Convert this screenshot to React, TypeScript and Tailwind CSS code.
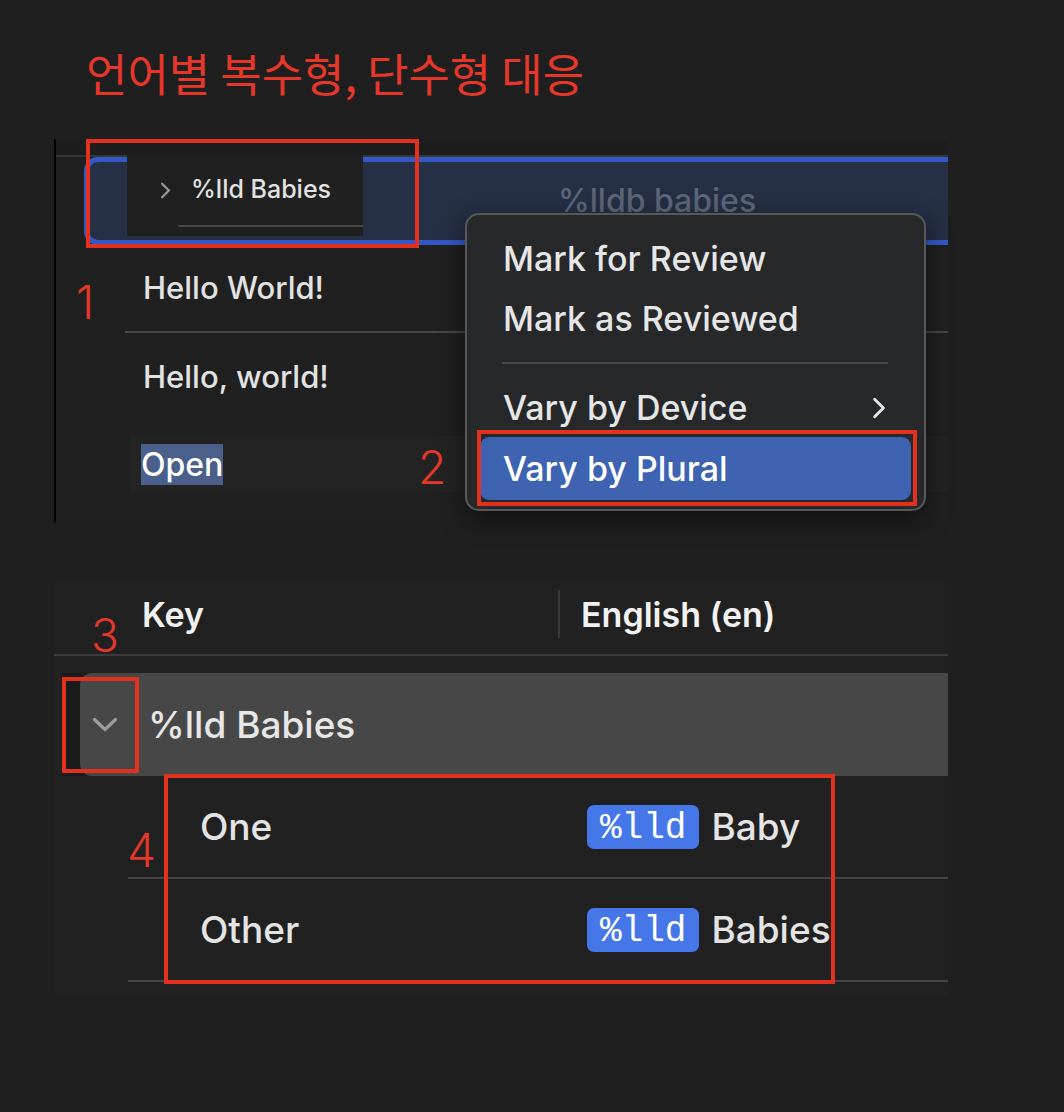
import React from 'react'

const sans = { fontFamily: 'Inter, "Noto Sans", sans-serif' }

function ChevronRight({ className }: { className?: string }) {
  return (
    <svg viewBox="0 0 12 20" className={className} fill="none" stroke="currentColor" strokeWidth="2.6" strokeLinecap="round" strokeLinejoin="round">
      <path d="M2 2l8 8-8 8" />
    </svg>
  )
}

function ChevronDown({ className }: { className?: string }) {
  return (
    <svg viewBox="0 0 26 15" className={className} fill="none" stroke="currentColor" strokeWidth="3.2" strokeLinecap="round" strokeLinejoin="round">
      <path d="M2.5 2.5l10.5 10 10.5-10" />
    </svg>
  )
}

function Badge({ children }: { children: React.ReactNode }) {
  return (
    <span className="h-[44px] px-[13px] pt-[4px] rounded-[7px] bg-[#4677e8] text-white text-[36px] leading-none flex items-center font-['Liberation_Mono',monospace]">
      {children}
    </span>
  )
}

function PluralRow({ name, word }: { name: string; word: string }) {
  return (
    <div className="ml-[74px] h-[103px] border-b-2 border-[#444444] flex items-center text-[37px] font-medium text-[#e4e4e4]">
      <div className="w-[459px] pl-[72px]">{name}</div>
      <Badge>%lld</Badge>
      <span className="ml-[12px]">{word}</span>
    </div>
  )
}

export default function App() {
  return (
    <div className="relative w-[1064px] h-[1112px] bg-[#1f1f1f] overflow-hidden" style={sans}>
      {/* title */}
      <div className="h-[139px] pl-[86px] pt-[50px]">
        <h1 className="text-[45px] leading-none font-normal text-[#e5372a] font-['Noto_Sans_CJK_KR',sans-serif]">
          언어별 복수형, 단수형 대응
        </h1>
      </div>

      {/* panel 1 : string list with context menu */}
      <div className="relative ml-[54px] w-[894px] h-[383px] bg-[#202020] border-l-2 border-black">
        <div className="h-[18px] bg-[#1d1d1d] border-b-2 border-[#363636]" />
        <div className="ml-[28px] h-[88px] border-y-[5px] border-l-[5px] border-[#3459c7] rounded-l-[14px] bg-[#252f45] flex items-center">
          <span className="pl-[469px] text-[32px] text-[#5d6679] font-medium">%lldb babies</span>
        </div>
        <div className="ml-[69px] h-[88px] pl-[18px] border-b-2 border-[#474747] flex items-center text-[31px] font-medium text-[#e2e2e2]">
          Hello World!
        </div>
        <div className="ml-[69px] h-[88px] pl-[18px] flex items-center text-[31px] font-medium text-[#e2e2e2]">
          Hello, world!
        </div>
        <div className="mt-[15px] ml-[74px] h-[56px] pl-[11px] bg-[#232323] flex items-center">
          <span className="h-[41px] bg-[#4a5f89] text-white text-[32px] font-medium leading-[41px]">Open</span>
        </div>

        {/* drag preview */}
        <div className="absolute left-[71px] top-[16px] w-[236px] h-[81px] bg-[#202020]">
          <div className="h-[70px] flex items-center pl-[33px]">
            <ChevronRight className="w-[11px] h-[17px] text-[#9a9a9a]" />
            <span className="ml-[20px] text-[25px] font-medium text-[#e2e2e2]">%lld Babies</span>
          </div>
          <div className="ml-[51px] h-[2px] bg-[#474747]" />
        </div>
      </div>

      {/* context menu */}
      <div className="absolute left-[465px] top-[213px] w-[461px] h-[298px] rounded-[14px] border-2 border-[#58585b] bg-[#27282a] pt-[13px] text-[34px] font-medium text-[#e6e6e6] shadow-[0_8px_24px_rgba(0,0,0,0.5)]">
        <div className="h-[60px] pl-[36px] flex items-center">Mark for Review</div>
        <div className="h-[60px] pl-[36px] flex items-center">Mark as Reviewed</div>
        <div className="h-[30px] flex items-center">
          <div className="ml-[35px] w-[386px] h-[2px] bg-[#484848]" />
        </div>
        <div className="h-[59px] pl-[36px] pr-[38px] flex items-center justify-between">
          <span>Vary by Device</span>
          <ChevronRight className="w-[14px] h-[22px] text-[#e6e6e6]" />
        </div>
        <div className="mx-[13px] h-[63px] rounded-[9px] bg-[#3d63b1] pl-[23px] flex items-center text-white">
          Vary by Plural
        </div>
      </div>

      {/* panel 2 : plural variations */}
      <div className="mt-[60px] ml-[54px] w-[894px] h-[413px] bg-[#212121]">
        <div className="h-[74px] pt-[8px] border-b-2 border-[#3b3b3b] flex items-start text-[34px] font-semibold text-[#f2f2f2]">
          <div className="w-[504px] h-[48px] pl-[88px] flex items-center">Key</div>
          <div className="w-[2px] h-[48px] bg-[#3a3a3a]" />
          <div className="h-[48px] pl-[21px] flex items-center">English (en)</div>
        </div>
        <div className="mt-[17px] ml-[8px] h-[103px] bg-[#1b1b1b]">
          <div className="ml-[18px] h-full rounded-l-[12px] bg-[#474747] flex items-center">
            <ChevronDown className="ml-[12px] w-[26px] h-[15px] text-[#9c9c9c]" />
            <span className="ml-[30px] text-[37px] font-medium text-[#e6e6e6]">%lld Babies</span>
          </div>
        </div>
        <PluralRow name="One" word="Baby" />
        <PluralRow name="Other" word="Babies" />
      </div>

      {/* annotation boxes */}
      <div className="absolute left-[86px] top-[139px] w-[333px] h-[109px] border-4 border-[#e2321f]" />
      <div className="absolute left-[477px] top-[430px] w-[440px] h-[76px] border-4 border-[#e2321f]" />
      <div className="absolute left-[62px] top-[677px] w-[77px] h-[96px] border-4 border-[#e2321f]" />
      <div className="absolute left-[164px] top-[774px] w-[671px] h-[210px] border-4 border-[#e2321f]" />

      {/* annotation numbers */}
      <span className="absolute left-[76px] top-[279px] text-[46px] leading-none font-light text-[#e5372a]">1</span>
      <span className="absolute left-[418px] top-[444px] text-[46px] leading-none font-light text-[#e5372a]">2</span>
      <span className="absolute left-[91px] top-[612px] text-[46px] leading-none font-light text-[#e5372a]">3</span>
      <span className="absolute left-[127px] top-[827px] text-[46px] leading-none font-light text-[#e5372a]">4</span>
    </div>
  )
}
